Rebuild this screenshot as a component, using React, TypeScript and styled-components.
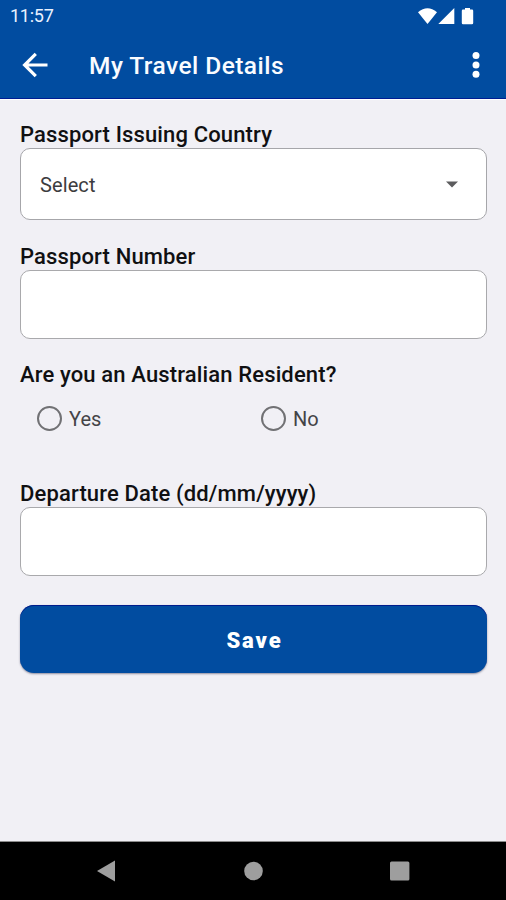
import React from "react";
import styled, { createGlobalStyle } from "styled-components";

const GlobalStyle = createGlobalStyle`
  *, *::before, *::after { box-sizing: border-box; }
  body { margin: 0; background: #f1f0f5; font-family: Roboto, "Noto Sans", sans-serif; }
  button, input { font-family: inherit; }
`;

const Screen = styled.div`
  display: flex;
  flex-direction: column;
  width: 100%;
  height: 900px;
  background: #f1f0f5;
  overflow: hidden;
`;

const StatusBar = styled.div`
  display: flex;
  align-items: center;
  justify-content: space-between;
  height: 32px;
  flex: none;
  padding: 0 32px 0 10px;
  background: #014ca0;
  color: #e9f1ff;
`;

const Clock = styled.span`
  font-size: 18px;
  line-height: 32px;
  letter-spacing: -0.25px;
`;

const AppBar = styled.header`
  display: flex;
  align-items: center;
  height: 68px;
  flex: none;
  padding: 0 20px 1px 22px;
  background: #014ca0;
  border-bottom: 1px solid #fff;
  box-shadow: inset 0 -1px #001d93;
`;

const Title = styled.h1`
  flex: 1;
  margin: 2px 0 0 40px;
  font-size: 24.5px;
  line-height: 32px;
  font-weight: 500;
  letter-spacing: 0.45px;
  color: #fafcff;
`;

const IconButton = styled.button`
  display: flex;
  padding: 0;
  border: 0;
  background: none;
`;

const Form = styled.main`
  flex: 1;
  display: flex;
  flex-direction: column;
  padding: 20px 19px 0 20px;
`;

const Field = styled.div<{ $gap: number }>`
  display: flex;
  flex-direction: column;
  margin-bottom: ${(p) => p.$gap}px;
`;

const Label = styled.label`
  height: 28px;
  line-height: 29px;
  font-size: 22px;
  font-weight: 500;
  letter-spacing: 0.14px;
  white-space: nowrap;
  color: #101012;
`;

const SelectBox = styled.div`
  display: flex;
  align-items: center;
  justify-content: space-between;
  height: 72px;
  padding: 0 28px 0 19px;
  border: 1.5px solid #a6a6aa;
  border-radius: 10px;
  background: #fff;
  font-size: 20px;
  letter-spacing: 0.1px;
  color: #3c3c3e;
`;

const SelectValue = styled.span`
  padding-top: 2px;
`;

const TextInput = styled.input`
  width: 100%;
  height: 69px;
  padding: 0 19px;
  border: 1.5px solid #a9a9ac;
  border-radius: 10px;
  background: #fff;
  font-size: 20px;
`;

const RadioRow = styled.div`
  display: grid;
  grid-template-columns: 224px 1fr;
  height: 60px;
  padding: 0 0 0 17px;
`;

const RadioOption = styled.span`
  display: flex;
  align-items: center;
  gap: 7px;
  font-size: 20px;
  line-height: 24px;
  color: #444447;
`;

const RadioText = styled.span`
  padding-top: 1px;
`;

const RadioCircle = styled.span`
  width: 25px;
  height: 25px;
  border: 2px solid #717174;
  border-radius: 50%;
`;

const SaveButton = styled.button`
  height: 68px;
  padding: 3px 0 0 2px;
  border: 0;
  border-radius: 14px;
  background: #014ca0;
  box-shadow: inset 0 1px #001c8c, 0 1px 2px rgba(60, 60, 90, 0.55);
  color: #fff;
  font-size: 22px;
  line-height: 26px;
  font-weight: 900;
  letter-spacing: 1.9px;
`;

const NavBar = styled.nav`
  display: flex;
  align-items: center;
  justify-content: space-between;
  flex: none;
  height: 59px;
  padding: 0 96px 0 97px;
  border-top: 1px solid #8c8c8c;
  background: #000;
`;

export default function App() {
  return (
    <Screen>
      <GlobalStyle />
      <StatusBar>
        <Clock>11:57</Clock>
        <svg width="56" height="18" viewBox="418 6 56 18" fill="#fff">
          <path d="M418 11.2Q427.500 3.500 437 11.200L427.500 23Z" />
          <path d="M454.300 7V23H438.300Z" />
          <path d="M465 7h5v1.500h2q1.200 0 1.200 1.200V22q0 1.200-1.200 1.200h-9q-1.200 0-1.200-1.200V9.700q0-1.200 1.200-1.200h2Z" />
        </svg>
      </StatusBar>
      <AppBar>
        <IconButton aria-label="Back">
          <svg width="27" height="26" viewBox="0 0 27 26" fill="none" stroke="#fff" strokeWidth="3.200">
            <path d="M25.500 13H3M13.800 1.800L2.600 13L13.800 24.200" />
          </svg>
        </IconButton>
        <Title>My Travel Details</Title>
        <IconButton aria-label="More options">
          <svg width="20" height="28" viewBox="0 0 20 28" fill="#fff">
            <circle cx="10" cy="4.500" r="3.500" />
            <circle cx="10" cy="13.900" r="3.500" />
            <circle cx="10" cy="23.200" r="3.500" />
          </svg>
        </IconButton>
      </AppBar>
      <Form>
        <Field $gap={22}>
          <Label>Passport Issuing Country</Label>
          <SelectBox>
            <SelectValue>Select</SelectValue>
            <svg width="12" height="7" viewBox="0 0 12 7" fill="#5c5c5e">
              <path d="M0 .5H12L6 6.500Z" />
            </svg>
          </SelectBox>
        </Field>
        <Field $gap={21}>
          <Label>Passport Number</Label>
          <TextInput aria-label="Passport Number" />
        </Field>
        <Field $gap={31}>
          <Label>Are you an Australian Resident?</Label>
          <RadioRow>
            <RadioOption><RadioCircle /><RadioText>Yes</RadioText></RadioOption>
            <RadioOption><RadioCircle /><RadioText>No</RadioText></RadioOption>
          </RadioRow>
        </Field>
        <Field $gap={29}>
          <Label>Departure Date (dd/mm/yyyy)</Label>
          <TextInput aria-label="Departure Date" />
        </Field>
        <SaveButton>Save</SaveButton>
      </Form>
      <NavBar>
        <svg width="18" height="22" viewBox="0 0 18 22" fill="#9e9e9e"><path d="M0 11L18 .5V21.500Z" /></svg>
        <svg width="20" height="20" viewBox="0 0 20 20" fill="#9e9e9e"><circle cx="10.500" cy="10" r="9.300" /></svg>
        <svg width="20" height="20" viewBox="0 0 20 20" fill="#9e9e9e"><rect x="0" y=".5" width="19.400" height="19" rx="1.500" /></svg>
      </NavBar>
    </Screen>
  );
}
